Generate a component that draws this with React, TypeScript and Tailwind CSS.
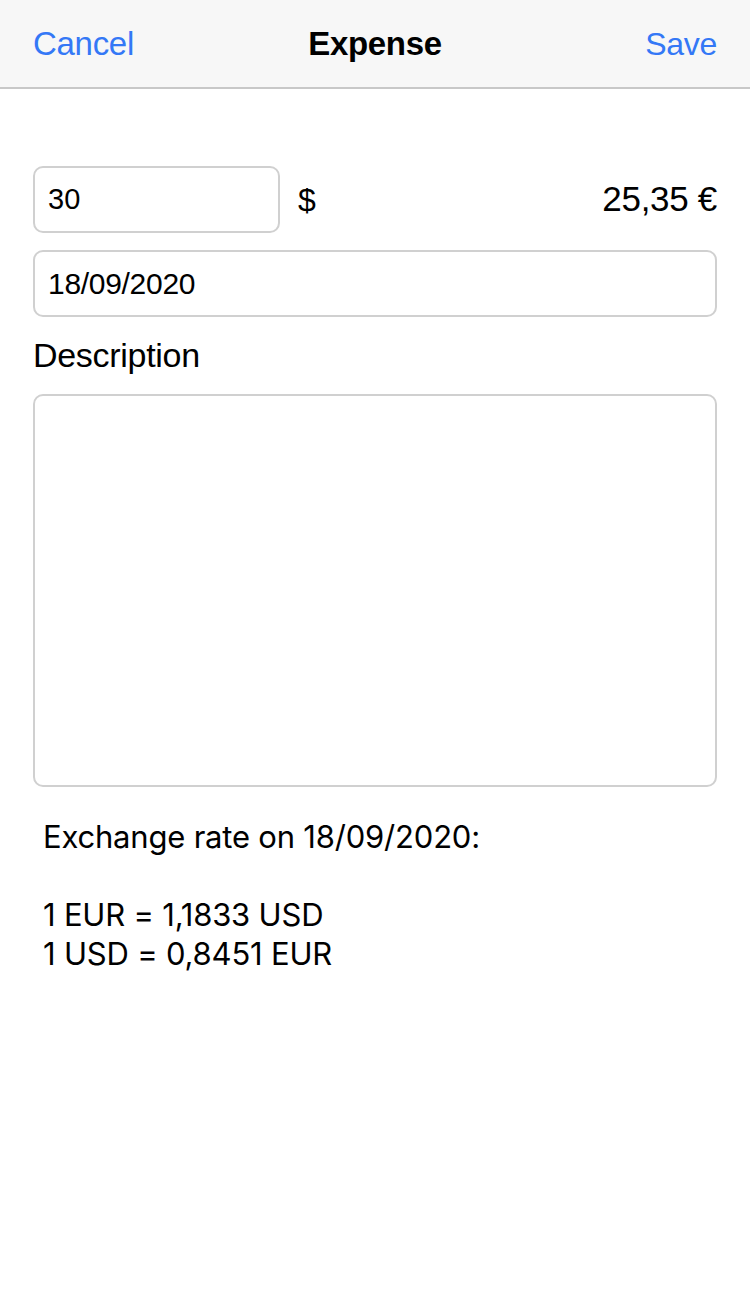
import React, { useState } from 'react';

export default function App() {
  const [amount, setAmount] = useState('30');
  const [date, setDate] = useState('18/09/2020');
  const [description, setDescription] = useState('');

  return (
    <div className="min-h-[1294px] w-[750px] bg-white font-['Liberation_Sans',Arial,sans-serif] text-black">
      {/* Nav bar */}
      <div className="grid h-[89px] grid-cols-3 items-center border-b-2 border-[#c8c8c8] bg-[#f7f7f7] px-[33px]">
        <button className="justify-self-start text-[33px] tracking-[-0.3px] text-[#3478f6]">Cancel</button>
        <div className="text-center text-[33px] font-bold tracking-[-0.3px]">Expense</div>
        <button className="justify-self-end text-[32px] tracking-[-0.3px] text-[#3478f6]">Save</button>
      </div>

      <div className="px-[33px] pt-[77px]">
        {/* Amount row */}
        <div className="flex items-center">
          <input
            value={amount}
            onChange={(e) => setAmount(e.target.value)}
            className="h-[67px] w-[247px] rounded-[10px] border-2 border-[#d0d0d0] px-[13px] font-['Liberation_Sans',Arial,sans-serif] text-[29px] outline-none"
          />
          <span className="ml-[18px] text-[32px]">$</span>
          <span className="ml-auto text-[35px] tracking-[-0.3px]">25,35 €</span>
        </div>

        <input
          value={date}
          onChange={(e) => setDate(e.target.value)}
          className="mt-[17px] h-[67px] w-full rounded-[10px] border-2 border-[#d0d0d0] px-[13px] font-['Liberation_Sans',Arial,sans-serif] text-[30px] tracking-[-0.3px] outline-none"
        />

        <div className="mt-[18px] text-[34px] leading-[40px] tracking-[-0.3px]">Description</div>

        <textarea
          value={description}
          onChange={(e) => setDescription(e.target.value)}
          className="mt-[19px] block h-[393px] w-full resize-none rounded-[10px] border-2 border-[#d0d0d0] p-[13px] text-[29px] outline-none"
        />

        <div className="mt-[30px] pl-[10px] font-['Inter',sans-serif] text-[31px] leading-[39px] tracking-[-0.2px]">
          <div>Exchange rate on 18/09/2020:</div>
          <div className="h-[39px]" />
          <div>1 EUR = 1,1833 USD</div>
          <div>1 USD = 0,8451 EUR</div>
        </div>
      </div>
    </div>
  );
}
